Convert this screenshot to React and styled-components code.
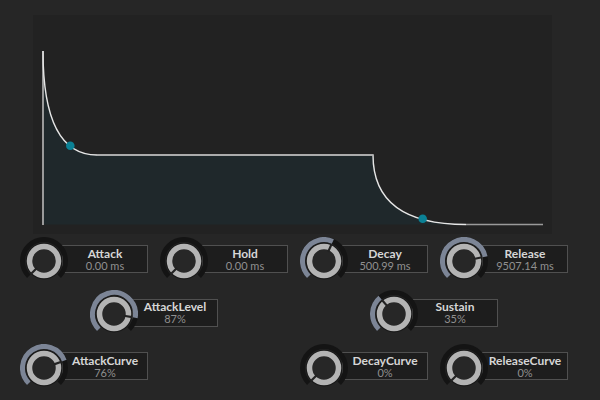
import React from "react";
import styled, { createGlobalStyle } from "styled-components";

const GlobalStyle = createGlobalStyle`
  html, body {
    margin: 0;
    padding: 0;
    background: #262626;
    font-family: Lato, "Open Sans", sans-serif;
  }
`;

const Page = styled.div`
  width: 600px;
  height: 400px;
  padding-top: 15px;
  box-sizing: border-box;
  overflow: hidden;
`;

const GraphPanel = styled.div`
  width: 519px;
  height: 219px;
  margin-left: 33px;
  background: #222222;
  svg {
    display: block;
  }
`;

const ControlGrid = styled.div`
  display: grid;
  grid-template-columns: repeat(8, 70px);
  grid-auto-rows: 53.5px;
  padding-left: 20px;
`;

const Control = styled.div`
  grid-column: ${(p) => p.$col} / span 2;
  grid-row: ${(p) => p.$row};
  display: flex;
  align-items: center;
`;

const KnobSvg = styled.svg`
  flex: none;
  position: relative;
  z-index: 1;
`;

const ValueBox = styled.div`
  width: 86px;
  height: 28px;
  margin-left: -6px;
  margin-bottom: 3px;
  box-sizing: border-box;
  border: 1px solid #505050;
  background: #1d1d1d;
  display: flex;
  flex-direction: column;
  align-items: center;
  justify-content: center;
`;

const Label = styled.span`
  display: block;
  font-size: 12px;
  line-height: 12px;
  font-weight: 700;
  color: #d6d6d6;
`;

const Value = styled.span`
  display: block;
  font-size: 11px;
  line-height: 11px;
  color: #909090;
`;

// knob geometry: 270° sweep starting at 7 o'clock
const START = -135;
const SWEEP = 270;

function polar(r, deg) {
  const a = ((deg - 90) * Math.PI) / 180;
  return [24 + r * Math.cos(a), 24 + r * Math.sin(a)];
}

function arc(r, from, to) {
  const [x1, y1] = polar(r, from);
  const [x2, y2] = polar(r, to);
  const large = to - from > 180 ? 1 : 0;
  return `M${x1} ${y1} A${r} ${r} 0 ${large} 1 ${x2} ${y2}`;
}

function Knob({ value }) {
  const angle = START + SWEEP * value;
  const [px1, py1] = polar(10, angle);
  const [px2, py2] = polar(18.5, angle);
  return (
    <KnobSvg width="48" height="48" viewBox="0 0 48 48">
      <path d={arc(21.5, START, START + SWEEP)} stroke="#141414" strokeWidth="5" fill="none" />
      {value > 0.005 && (
        <path d={arc(21.5, START, angle)} stroke="#7c8596" strokeWidth="5" fill="none" />
      )}
      <circle cx="24" cy="24" r="18.5" fill="#191919" />
      <circle cx="24" cy="24" r="14.5" fill="#272727" stroke="#b4b4b4" strokeWidth="5.5" />
      <line x1={px1} y1={py1} x2={px2} y2={py2} stroke="#232323" strokeWidth="2.2" />
    </KnobSvg>
  );
}

const controls = [
  { name: "Attack", value: "0.00 ms", v: 0, col: 1, row: 1 },
  { name: "Hold", value: "0.00 ms", v: 0, col: 3, row: 1 },
  { name: "Decay", value: "500.99 ms", v: 0.59, col: 5, row: 1 },
  { name: "Release", value: "9507.14 ms", v: 0.79, col: 7, row: 1 },
  { name: "AttackLevel", value: "87%", v: 0.87, col: 2, row: 2 },
  { name: "Sustain", value: "35%", v: 0.35, col: 6, row: 2 },
  { name: "AttackCurve", value: "76%", v: 0.76, col: 1, row: 3 },
  { name: "DecayCurve", value: "0%", v: 0, col: 5, row: 3 },
  { name: "ReleaseCurve", value: "0%", v: 0, col: 7, row: 3 },
];

function Envelope() {
  // panel-local coords (panel origin at page 33,15)
  const ox = 33;
  const oy = 15;
  const X = (x) => x - ox;
  const Y = (y) => y - oy;
  const curve =
    `M${X(43)} ${Y(51)} Q${X(43)} ${Y(155)} ${X(97)} ${Y(155)} ` +
    `L${X(373)} ${Y(155)} Q${X(373)} ${Y(224.5)} ${X(466)} ${Y(224.5)}`;
  const fill = `${curve} L${X(43)} ${Y(224.5)} Z`;
  return (
    <svg width="519" height="219" viewBox="0 0 519 219">
      <path d={fill} fill="#1f282b" />
      <line x1={X(466)} y1={Y(224.5)} x2={X(543)} y2={Y(224.5)} stroke="#9a9a9a" strokeWidth="1.6" />
      <line x1={X(43)} y1={Y(51)} x2={X(43)} y2={Y(225)} stroke="#9a9a9a" strokeWidth="2" />
      <path d={curve} fill="none" stroke="#e6e6e6" strokeWidth="1.4" />
      <line x1={X(97)} y1={Y(155)} x2={X(373)} y2={Y(155)} stroke="#a8a8a8" strokeWidth="1.6" />
      <circle cx={X(70.3)} cy={Y(145.8)} r="4.3" fill="#0b8195" />
      <circle cx={X(422.7)} cy={Y(218.8)} r="4.3" fill="#0b8195" />
    </svg>
  );
}

export default function App() {
  return (
    <Page>
      <GlobalStyle />
      <GraphPanel>
        <Envelope />
      </GraphPanel>
      <ControlGrid>
        {controls.map((c) => (
          <Control key={c.name} $col={c.col} $row={c.row}>
            <Knob value={c.v} />
            <ValueBox>
              <Label>{c.name}</Label>
              <Value>{c.value}</Value>
            </ValueBox>
          </Control>
        ))}
      </ControlGrid>
    </Page>
  );
}
